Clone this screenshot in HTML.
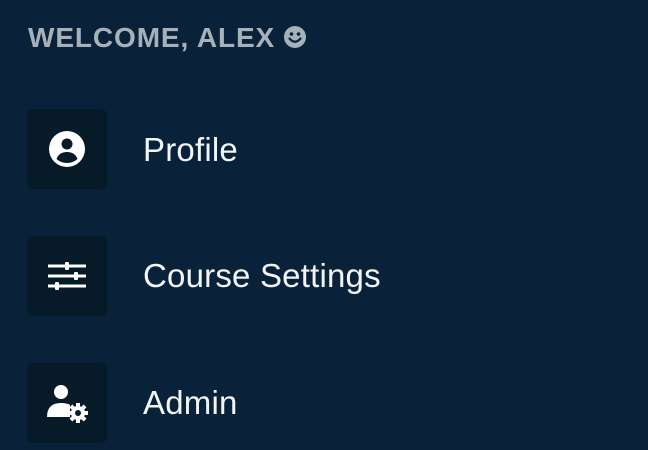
<!DOCTYPE html>
<html><head><style>
html,body{margin:0;padding:0;width:648px;height:450px;overflow:hidden;background:#0a2239;font-family:"Liberation Sans",sans-serif}
.h{position:absolute;left:28px;top:21px;font-size:28px;font-weight:bold;color:#a7b1ba;letter-spacing:0.9px;line-height:34px;white-space:nowrap}
.box{position:absolute;left:27px;width:80px;height:80px;background:#061a28;border-radius:5px}
.box svg{position:absolute;left:20px;top:20px}
.t{position:absolute;left:143px;font-size:33px;color:#f2f4f6;line-height:40px;letter-spacing:0.2px;white-space:nowrap}
</style></head><body>
<div class="h">WELCOME, ALEX <svg width="22" height="22" viewBox="0 0 22 22" style="vertical-align:-1px"><circle cx="11" cy="11" r="11" fill="#a7b1ba"/><circle cx="7.5" cy="8" r="1.8" fill="#0a2239"/><circle cx="14.5" cy="8" r="1.8" fill="#0a2239"/><path d="M5.5 12.5 Q11 19 16.5 12.5" stroke="#0a2239" stroke-width="2.2" fill="none" stroke-linecap="round"/></svg></div>

<div class="box" style="top:109px"><svg width="40" height="40" viewBox="0 0 40 40"><circle cx="20" cy="20" r="18" fill="#fff"/><circle cx="20" cy="15" r="5.5" fill="#061a28"/><path d="M9.5 30 Q12 23 20 23 Q28 23 30.5 30 Q26 34 20 34 Q14 34 9.5 30Z" fill="#061a28"/></svg></div>
<div class="t" style="top:130px">Profile</div>

<div class="box" style="top:236px"><svg width="40" height="40" viewBox="0 0 40 40"><g fill="#fff"><rect x="1" y="8.5" width="38" height="3"/><rect x="1" y="18.5" width="38" height="3"/><rect x="1" y="28.5" width="38" height="3"/><rect x="18" y="6" width="4" height="8" rx="1"/><rect x="27" y="16" width="4" height="8" rx="1"/><rect x="8" y="26" width="4" height="8" rx="1"/></g></svg></div>
<div class="t" style="top:256px">Course Settings</div>

<div class="box" style="top:363px"><svg width="44" height="40" viewBox="0 0 44 40"><g fill="#fff"><circle cx="14" cy="9" r="7"/><path d="M0 34 Q0 20 14 20 Q20 20 23 22 L23 34Z"/><g transform="translate(31,30)"><circle r="7"/><g><rect x="-2" y="-10" width="4" height="20"/><rect x="-2" y="-10" width="4" height="20" transform="rotate(45)"/><rect x="-2" y="-10" width="4" height="20" transform="rotate(90)"/><rect x="-2" y="-10" width="4" height="20" transform="rotate(135)"/></g><circle r="3" fill="#061a28"/></g></g></svg></div>
<div class="t" style="top:383px">Admin</div>
</body></html>
